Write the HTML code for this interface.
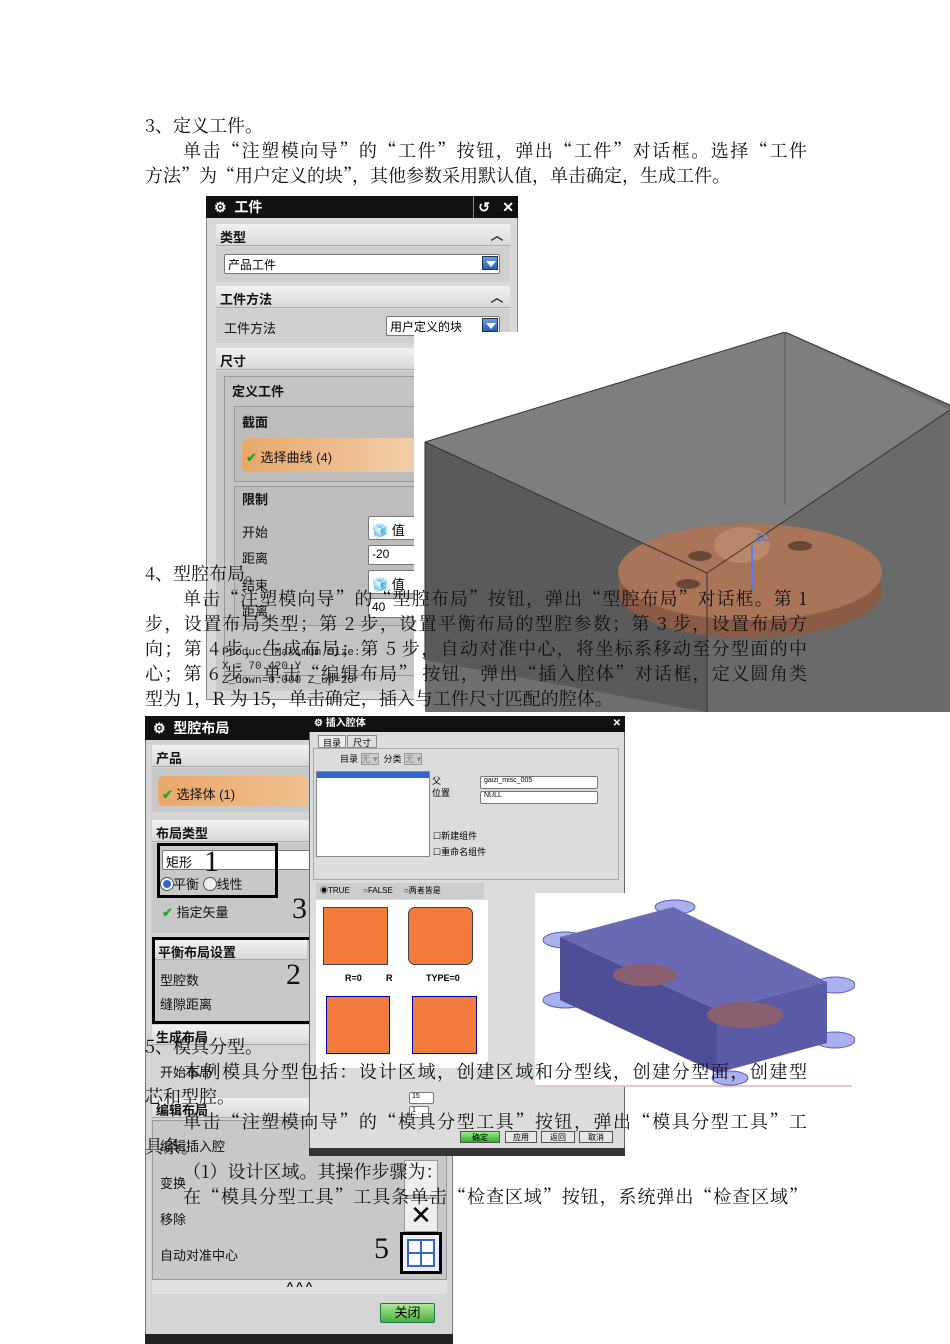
<!DOCTYPE html>
<html><head><meta charset="utf-8">
<style>
*{margin:0;padding:0;box-sizing:border-box}
body{width:950px;height:1344px;background:#fff;position:relative;overflow:hidden;font-family:"Liberation Sans","Noto Sans CJK SC",sans-serif}
.a{position:absolute}
.t{position:absolute;font-family:"Noto Serif CJK SC","Liberation Serif",serif;font-size:18px;line-height:22px;color:#111;white-space:nowrap}
.j{text-align:justify;text-align-last:justify;white-space:normal;overflow:hidden;height:24px}
.dl{font-size:13px;color:#111}
.hd{position:absolute;background:linear-gradient(#f2f2f2,#d8d8d8);font-weight:bold;font-size:13px;padding:3px 4px;color:#111;border-bottom:1px solid #aaa}
.sel{position:absolute;background:#fff;border:1px solid #777;font-size:12px;padding:1px 3px;border-radius:2px}
.arr{position:absolute;right:1px;top:1px;width:16px;height:14px;background:linear-gradient(#6a9be0,#2a5eb8);border:1px solid #234}
.arr:after{content:"";position:absolute;left:3px;top:4px;border-left:5px solid transparent;border-right:5px solid transparent;border-top:6px solid #fff}
.chev{position:absolute;width:22px;height:20px;font-size:13px;font-weight:bold;text-align:center;color:#333}
.bb{position:absolute;border:3px solid #000}
.big{position:absolute;font-family:"Liberation Serif",serif;font-size:30px;color:#111}
.ck{color:#2a2;font-weight:bold}
</style></head><body>

<!-- Dialog 1 -->
<div class="a" style="left:206px;top:196px;width:312px;height:504px;background:#d9d9d9;border:1px solid #888"></div>
<div class="a" style="left:206px;top:196px;width:312px;height:22px;background:#111;color:#fff;font-weight:bold;font-size:14px;line-height:22px;padding-left:8px">⚙ &nbsp;工件<span style="position:absolute;right:24px;top:0;border-left:1px solid #888;padding:0 4px">↺</span><span style="position:absolute;right:4px;top:0">✕</span></div>
<div class="hd" style="left:216px;top:224px;width:294px;height:22px">类型</div>
<div class="chev" style="left:486px;top:225px">︿</div>
<div class="a" style="left:216px;top:247px;width:294px;height:34px;background:#cfcfcf"></div>
<div class="sel" style="left:224px;top:254px;width:276px;height:20px">产品工件<span class="arr"></span></div>
<div class="hd" style="left:216px;top:286px;width:294px;height:22px">工件方法</div>
<div class="chev" style="left:486px;top:287px">︿</div>
<div class="a" style="left:216px;top:309px;width:294px;height:34px;background:#cfcfcf"></div>
<div class="a dl" style="left:224px;top:318px">工件方法</div>
<div class="sel" style="left:386px;top:316px;width:114px;height:20px">用户定义的块<span class="arr"></span></div>
<div class="hd" style="left:216px;top:348px;width:294px;height:22px">尺寸</div>
<div class="a" style="left:216px;top:371px;width:294px;height:320px;background:#c8c8c8"></div>
<div class="a" style="left:224px;top:376px;width:280px;height:300px;background:#c4c4c4;border:1px solid #999"></div>
<div class="a dl" style="left:232px;top:381px;font-weight:bold">定义工件</div>
<div class="a" style="left:234px;top:406px;width:270px;height:76px;background:#bdbdbd;border:1px solid #999"></div>
<div class="a dl" style="left:242px;top:412px;font-weight:bold">截面</div>
<div class="a" style="left:242px;top:438px;width:180px;height:34px;border-radius:6px;background:linear-gradient(90deg,#e9a76a,#f1cfac)"></div>
<div class="a dl" style="left:246px;top:447px"><span class="ck">✔</span> 选择曲线 (4)</div>
<div class="a" style="left:234px;top:486px;width:270px;height:140px;background:#bdbdbd;border:1px solid #999"></div>
<div class="a dl" style="left:242px;top:489px;font-weight:bold">限制</div>
<div class="a dl" style="left:242px;top:522px">开始</div>
<div class="sel" style="left:368px;top:516px;width:60px;height:24px;font-size:13px;padding-top:3px">🧊 值</div>
<div class="a dl" style="left:242px;top:548px">距离</div>
<div class="sel" style="left:368px;top:545px;width:60px;height:20px">-20</div>
<div class="a dl" style="left:242px;top:575px">结束</div>
<div class="sel" style="left:368px;top:570px;width:60px;height:24px;font-size:13px;padding-top:3px">🧊 值</div>
<div class="a dl" style="left:242px;top:601px">距离</div>
<div class="sel" style="left:368px;top:598px;width:60px;height:20px">40</div>
<div class="a" style="left:216px;top:632px;width:294px;height:66px;font-family:'Liberation Mono',monospace;font-size:11px;color:#222;padding:14px 6px;line-height:14px">Product Maximum Size:<br>X = 70.420 Y<br>Z_down=0.000 Z_up=20</div>

<!-- 3D box image -->
<svg class="a" style="left:414px;top:332px" width="536" height="380" viewBox="414 332 536 380">
<rect x="414" y="332" width="536" height="380" fill="#fff"/>
<polygon points="425,442 785,332 950,405 950,712 425,712" fill="#6e6e6e"/>
<polygon points="425,442 785,332 950,410 707,573" fill="#7e7e7e"/>
<polygon points="425,442 707,573 707,712 425,660" fill="#5a5a5a"/>
<polygon points="707,573 950,410 950,712 707,712" fill="#6a6a6a"/>
<ellipse cx="750" cy="590" rx="132" ry="48" fill="#8a5c45"/>
<ellipse cx="750" cy="572" rx="132" ry="48" fill="#a87559"/>
<ellipse cx="742" cy="545" rx="28" ry="18" fill="#b98769"/>
<ellipse cx="700" cy="556" rx="12" ry="5" fill="#6a4838"/>
<ellipse cx="800" cy="546" rx="12" ry="5" fill="#6a4838"/>
<ellipse cx="688" cy="584" rx="12" ry="5" fill="#6a4838"/>
<line x1="425" y1="442" x2="785" y2="332" stroke="#333"/>
<line x1="785" y1="332" x2="950" y2="405" stroke="#333"/>
<line x1="785" y1="332" x2="785" y2="505" stroke="#555"/>
<line x1="425" y1="442" x2="707" y2="573" stroke="#333"/>
<line x1="707" y1="573" x2="950" y2="410" stroke="#333"/>
<line x1="707" y1="573" x2="707" y2="712" stroke="#333"/>
<line x1="425" y1="442" x2="425" y2="660" stroke="#333"/>
<line x1="752" y1="545" x2="752" y2="590" stroke="#57f" stroke-width="2"/>
<text x="755" y="541" font-size="11" fill="#46c">ZC</text>
</svg>

<!-- Dialog 2 -->
<div class="a" style="left:145px;top:716px;width:308px;height:628px;background:#d4d4d4;border:1px solid #777"></div>
<div class="a" style="left:145px;top:716px;width:308px;height:24px;background:#111;color:#fff;font-weight:bold;font-size:14px;line-height:24px;padding-left:8px">⚙ &nbsp;型腔布局</div>
<div class="hd" style="left:152px;top:745px;width:160px;height:22px">产品</div>
<div class="a" style="left:152px;top:768px;width:160px;height:44px;background:#c8c8c8"></div>
<div class="a" style="left:158px;top:776px;width:150px;height:30px;border-radius:6px;background:linear-gradient(90deg,#e9a76a,#f0c08e)"></div>
<div class="a dl" style="left:162px;top:784px"><span class="ck">✔</span> 选择体 (1)</div>
<div class="hd" style="left:152px;top:820px;width:160px;height:22px">布局类型</div>
<div class="a" style="left:152px;top:843px;width:160px;height:90px;background:#c8c8c8"></div>
<div class="sel" style="left:162px;top:850px;width:150px;height:20px;font-size:13px">矩形</div>
<div class="bb" style="left:157px;top:843px;width:121px;height:55px"></div>
<div class="big" style="left:204px;top:845px">1</div>
<div class="a dl" style="left:161px;top:874px"><span style="display:inline-block;width:12px;height:12px;border-radius:50%;background:#36c;border:2px solid #fff;box-shadow:0 0 0 1px #555;vertical-align:-1px"></span>平衡 <span style="display:inline-block;width:14px;height:14px;border-radius:50%;border:1px solid #555;background:#eee;vertical-align:-2px"></span>线性</div>
<div class="a dl" style="left:162px;top:902px"><span class="ck">✔</span> 指定矢量</div>
<div class="big" style="left:292px;top:892px">3</div>
<div class="a" style="left:152px;top:937px;width:158px;height:85px;background:#c8c8c8"></div>
<div class="hd" style="left:155px;top:940px;width:152px;height:20px;padding:2px 3px">平衡布局设置</div>
<div class="bb" style="left:152px;top:937px;width:160px;height:87px"></div>
<div class="a dl" style="left:160px;top:970px">型腔数</div>
<div class="a dl" style="left:160px;top:994px">缝隙距离</div>
<div class="big" style="left:286px;top:958px">2</div>
<div class="hd" style="left:152px;top:1025px;width:160px;height:20px;padding:2px 4px">生成布局</div>
<div class="a dl" style="left:160px;top:1062px">开始布局</div>
<div class="hd" style="left:152px;top:1098px;width:160px;height:20px;padding:2px 4px">编辑布局</div>
<div class="a" style="left:152px;top:1120px;width:295px;height:160px;background:#c8c8c8;border:1px solid #999"></div>
<div class="a dl" style="left:160px;top:1136px">编辑插入腔</div>
<div class="a dl" style="left:160px;top:1173px">变换</div>
<div class="a dl" style="left:160px;top:1209px">移除</div>
<div class="a dl" style="left:160px;top:1245px">自动对准中心</div>
<div class="big" style="left:374px;top:1232px">5</div>
<div class="a" style="left:404px;top:1160px;width:34px;height:36px;background:#eee;border:1px solid #999"></div>
<div class="a" style="left:404px;top:1198px;width:34px;height:34px;background:#eee;border:1px solid #999;font-size:26px;text-align:center;line-height:32px">✕</div>
<div class="a" style="left:400px;top:1232px;width:42px;height:42px;border:3px solid #000;background:#eef"></div>
<div class="a" style="left:407px;top:1239px;width:28px;height:28px;border:2px solid #36c;background:linear-gradient(#36c,#36c) center/2px 100% no-repeat,linear-gradient(#36c,#36c) center/100% 2px no-repeat,#fff"></div>
<div class="a" style="left:152px;top:1280px;width:295px;height:14px;background:#e0e0e0;text-align:center;font-size:11px;font-weight:bold;line-height:14px">^ ^ ^</div>
<div class="a" style="left:380px;top:1303px;width:55px;height:20px;background:linear-gradient(#aee89a,#4cae3a);border:1px solid #275;border-radius:2px;text-align:center;font-size:13px;line-height:18px">关闭</div>
<div class="a" style="left:145px;top:1334px;width:308px;height:10px;background:#222"></div>

<!-- Dialog 3 -->
<div class="a" style="left:309px;top:716px;width:316px;height:440px;background:#dcdcdc;border:1px solid #666"></div>
<div class="a" style="left:309px;top:716px;width:316px;height:16px;background:#111;color:#fff;font-size:10px;font-weight:bold;line-height:16px;padding-left:5px">⚙ 插入腔体<span style="position:absolute;right:4px">✕</span></div>
<div class="a" style="left:318px;top:735px;width:28px;height:13px;background:#eee;border:1px solid #888;font-size:9px;text-align:center">目录</div>
<div class="a" style="left:347px;top:735px;width:30px;height:13px;background:#ddd;border:1px solid #888;font-size:9px;text-align:center">尺寸</div>
<div class="a" style="left:313px;top:748px;width:306px;height:132px;border:1px solid #aaa"></div>
<div class="a" style="left:340px;top:752px;font-size:9px">目录 <span style="background:#ccc;border:1px solid #999;color:#888">无 ▾</span> &nbsp;分类 <span style="background:#ccc;border:1px solid #999;color:#888">无 ▾</span></div>
<div class="a" style="left:316px;top:771px;width:114px;height:86px;background:#fff;border:1px solid #888"></div>
<div class="a" style="left:317px;top:772px;width:112px;height:6px;background:#36c"></div>
<div class="a" style="left:432px;top:775px;font-size:9px;line-height:12px">父<br>位置</div>
<div class="sel" style="left:480px;top:776px;width:118px;height:13px;font-size:7px;padding:0 3px">gaizi_misc_005</div>
<div class="sel" style="left:480px;top:791px;width:118px;height:13px;font-size:7px;padding:0 3px">NULL</div>
<div class="a" style="left:433px;top:828px;font-size:9px;line-height:16px">☐新建组件<br>☐重命名组件</div>
<div class="a" style="left:316px;top:883px;width:168px;height:16px;background:#ccc;font-size:8px;line-height:16px;padding-left:4px">◉TRUE &nbsp;&nbsp;&nbsp;&nbsp;&nbsp;○FALSE &nbsp;&nbsp;&nbsp;&nbsp;○两者皆是</div>
<div class="a" style="left:316px;top:900px;width:172px;height:168px;background:#fff"></div>
<div class="a" style="left:323px;top:907px;width:65px;height:58px;background:#f27a3a;border:1px solid #444"></div>
<div class="a" style="left:408px;top:907px;width:65px;height:58px;background:#f27a3a;border:1px solid #444;border-radius:7px"></div>
<div class="a" style="left:326px;top:996px;width:64px;height:58px;background:#f27a3a;border:1px solid #00a"></div>
<div class="a" style="left:412px;top:996px;width:65px;height:58px;background:#f27a3a;border:1px solid #00a"></div>
<div class="a" style="left:345px;top:973px;font-size:9px;font-weight:bold">R=0</div>
<div class="a" style="left:386px;top:973px;font-size:9px;font-weight:bold">R</div>
<div class="a" style="left:426px;top:973px;font-size:9px;font-weight:bold">TYPE=0</div>
<div class="sel" style="left:409px;top:1092px;width:25px;height:12px;font-size:7px;padding:0 2px">15</div>
<div class="sel" style="left:409px;top:1106px;width:20px;height:12px;font-size:7px;padding:0 2px">1</div>
<div class="a" style="left:460px;top:1131px;width:40px;height:12px;background:linear-gradient(#9e8,#3a3);border:1px solid #555;font-size:8px;text-align:center">确定</div>
<div class="a" style="left:505px;top:1131px;width:32px;height:12px;background:#e6e6e6;border:1px solid #555;font-size:8px;text-align:center">应用</div>
<div class="a" style="left:541px;top:1131px;width:34px;height:12px;background:#e6e6e6;border:1px solid #555;font-size:8px;text-align:center">返回</div>
<div class="a" style="left:579px;top:1131px;width:34px;height:12px;background:#e6e6e6;border:1px solid #555;font-size:8px;text-align:center">取消</div>
<div class="a" style="left:309px;top:1148px;width:316px;height:8px;background:#333"></div>

<!-- Blue model -->
<svg class="a" style="left:535px;top:893px" width="320" height="194" viewBox="535 893 320 194">
<rect x="535" y="893" width="320" height="194" fill="#fff"/>
<g fill="#aab0ee" stroke="#5560b0">
<ellipse cx="565" cy="940" rx="22" ry="8"/><ellipse cx="565" cy="1000" rx="22" ry="8"/>
<ellipse cx="675" cy="907" rx="20" ry="7"/><ellipse cx="835" cy="985" rx="20" ry="8"/>
<ellipse cx="835" cy="1040" rx="20" ry="8"/><ellipse cx="730" cy="1078" rx="18" ry="7"/>
</g>
<polygon points="560,937 673,907 827,982 717,1010" fill="#6a6ab4"/>
<polygon points="560,937 717,1010 717,1073 560,1000" fill="#4e4e98"/>
<polygon points="717,1010 827,982 827,1043 717,1073" fill="#5a5aa6"/>
<ellipse cx="645" cy="975" rx="32" ry="11" fill="#8a6070"/>
<ellipse cx="745" cy="1015" rx="38" ry="13" fill="#8a6070"/>
<line x1="535" y1="1086" x2="852" y2="1086" stroke="#d88" />
</svg>

<!-- Text -->
<div class="t" style="left:145px;top:114px">3、定义工件。</div>
<div class="t j" style="left:183px;top:139px;width:624px">单击“注塑模向导”的“工件”按钮，弹出“工件”对话框。选择“工件</div>
<div class="t" style="left:145px;top:164px">方法”为“用户定义的块”，其他参数采用默认值，单击确定，生成工件。</div>

<div class="t" style="left:145px;top:562px">4、型腔布局。</div>
<div class="t j" style="left:183px;top:587px;width:624px">单击“注塑模向导”的“型腔布局”按钮，弹出“型腔布局”对话框。第 1</div>
<div class="t j" style="left:145px;top:612px;width:662px">步，设置布局类型；第 2 步，设置平衡布局的型腔参数；第 3 步，设置布局方</div>
<div class="t j" style="left:145px;top:637px;width:662px">向；第 4 步，生成布局；第 5 步，自动对准中心，将坐标系移动至分型面的中</div>
<div class="t j" style="left:145px;top:662px;width:662px">心；第 6 步，单击“编辑布局” 按钮，弹出“插入腔体”对话框，定义圆角类</div>
<div class="t" style="left:145px;top:687px">型为 1，R 为 15，单击确定，插入与工件尺寸匹配的腔体。</div>

<div class="t" style="left:145px;top:1035px">5、模具分型。</div>
<div class="t j" style="left:183px;top:1060px;width:624px">本例模具分型包括：设计区域，创建区域和分型线，创建分型面，创建型</div>
<div class="t" style="left:145px;top:1085px">芯和型腔。</div>
<div class="t j" style="left:183px;top:1110px;width:624px">单击“注塑模向导”的“模具分型工具”按钮，弹出“模具分型工具”工</div>
<div class="t" style="left:145px;top:1135px">具条。</div>
<div class="t" style="left:183px;top:1160px">（1）设计区域。其操作步骤为：</div>
<div class="t j" style="left:183px;top:1185px;width:624px">在“模具分型工具”工具条单击“检查区域”按钮，系统弹出“检查区域”</div>
</body></html>
